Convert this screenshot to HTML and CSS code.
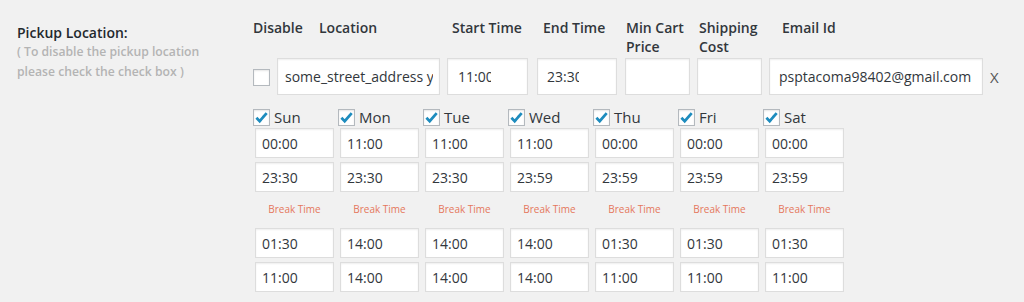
FILE: index.html
```html
<!DOCTYPE html>
<html lang="en">
<head>
<meta charset="utf-8">
<title>Pickup Location</title>
<link rel="stylesheet" href="styles.css">
</head>
<body>
<div class="form-row">
  <div class="th">
    <div class="title">Pickup Location:</div>
    <div class="hint">( To disable the pickup location<br>please check the check box )</div>
  </div>
  <div class="td">
    <div class="head">
      <span class="h w-disable">Disable</span>
      <span class="h w-location">Location</span>
      <span class="h w-start">Start Time</span>
      <span class="h w-end">End Time</span>
      <span class="h w-min">Min Cart Price</span>
      <span class="h w-ship">Shipping Cost</span>
      <span class="h w-email">Email Id</span>
    </div>
    <div class="fields">
      <span class="cb"></span>
      <input class="inp f-location" type="text" value="some_street_address y">
      <input class="inp f-start" type="text" value="11:00">
      <input class="inp f-end" type="text" value="23:30">
      <input class="inp f-min" type="text" value="">
      <input class="inp f-ship" type="text" value="">
      <input class="inp f-email" type="text" value="psptacoma98402@gmail.com">
      <span class="remove">X</span>
    </div>
    <div class="days">
      <div class="day">
        <div class="day-label"><span class="cb checked"><svg viewBox="0 0 16 16"><path d="M3.2 8.2l3.1 3.2 6.6-7.6" /></svg></span>Sun</div>
        <input class="inp time" type="text" value="00:00">
        <input class="inp time gap" type="text" value="23:30">
        <div class="break">Break Time</div>
        <input class="inp time" type="text" value="01:30">
        <input class="inp time gap" type="text" value="11:00">
      </div>
      <div class="day">
        <div class="day-label"><span class="cb checked"><svg viewBox="0 0 16 16"><path d="M3.2 8.2l3.1 3.2 6.6-7.6" /></svg></span>Mon</div>
        <input class="inp time" type="text" value="11:00">
        <input class="inp time gap" type="text" value="23:30">
        <div class="break">Break Time</div>
        <input class="inp time" type="text" value="14:00">
        <input class="inp time gap" type="text" value="14:00">
      </div>
      <div class="day">
        <div class="day-label"><span class="cb checked"><svg viewBox="0 0 16 16"><path d="M3.2 8.2l3.1 3.2 6.6-7.6" /></svg></span>Tue</div>
        <input class="inp time" type="text" value="11:00">
        <input class="inp time gap" type="text" value="23:30">
        <div class="break">Break Time</div>
        <input class="inp time" type="text" value="14:00">
        <input class="inp time gap" type="text" value="14:00">
      </div>
      <div class="day">
        <div class="day-label"><span class="cb checked"><svg viewBox="0 0 16 16"><path d="M3.2 8.2l3.1 3.2 6.6-7.6" /></svg></span>Wed</div>
        <input class="inp time" type="text" value="11:00">
        <input class="inp time gap" type="text" value="23:59">
        <div class="break">Break Time</div>
        <input class="inp time" type="text" value="14:00">
        <input class="inp time gap" type="text" value="14:00">
      </div>
      <div class="day">
        <div class="day-label"><span class="cb checked"><svg viewBox="0 0 16 16"><path d="M3.2 8.2l3.1 3.2 6.6-7.6" /></svg></span>Thu</div>
        <input class="inp time" type="text" value="00:00">
        <input class="inp time gap" type="text" value="23:59">
        <div class="break">Break Time</div>
        <input class="inp time" type="text" value="01:30">
        <input class="inp time gap" type="text" value="11:00">
      </div>
      <div class="day">
        <div class="day-label"><span class="cb checked"><svg viewBox="0 0 16 16"><path d="M3.2 8.2l3.1 3.2 6.6-7.6" /></svg></span>Fri</div>
        <input class="inp time" type="text" value="00:00">
        <input class="inp time gap" type="text" value="23:59">
        <div class="break">Break Time</div>
        <input class="inp time" type="text" value="01:30">
        <input class="inp time gap" type="text" value="11:00">
      </div>
      <div class="day">
        <div class="day-label"><span class="cb checked"><svg viewBox="0 0 16 16"><path d="M3.2 8.2l3.1 3.2 6.6-7.6" /></svg></span>Sat</div>
        <input class="inp time" type="text" value="00:00">
        <input class="inp time gap" type="text" value="23:59">
        <div class="break">Break Time</div>
        <input class="inp time" type="text" value="01:30">
        <input class="inp time gap" type="text" value="11:00">
      </div>
    </div>
  </div>
</div>
</body>
</html>
```
FILE: styles.css
```css
* { box-sizing: border-box; }
html, body {
  margin: 0;
  padding: 0;
  background: #f1f1f1;
  font-family: "Open Sans", "Noto Sans", sans-serif;
  color: #32373c;
  height: 302px;
  overflow: hidden;
}
.form-row {
  display: flex;
}
.th {
  width: 253px;
  padding: 24px 0 0 17px;
  flex: none;
}
.title {
  font-size: 14px;
  font-weight: 600;
  line-height: 18px;
  color: #23282d;
}
.hint {
  font-size: 12.2px;
  font-weight: 600;
  line-height: 20px;
  color: #b4b4b4;
}
.td {
  padding-top: 18px;
}
.head {
  display: flex;
  align-items: flex-start;
  font-size: 14px;
  font-weight: 600;
  line-height: 19px;
  color: #32373c;
  height: 38px;
}
.h { display: block; flex: none; }
.w-disable { width: 66px; }
.w-location { width: 133px; }
.w-start { width: 91px; }
.w-end { width: 83px; }
.w-min { width: 73px; padding-right: 8px; }
.w-ship { width: 83px; padding-right: 16px; }
.w-email { width: 120px; }

.fields {
  margin-top: 2px;
  display: flex;
  align-items: center;
  height: 37px;
}
.cb {
  display: inline-block;
  flex: none;
  width: 17px;
  height: 17px;
  background: #fff;
  border: 1px solid #b4b9be;
  box-shadow: inset 0 1px 2px rgba(0,0,0,.1);
  position: relative;
}
.fields .cb { margin: 2px 7px 0 0; }
.cb svg {
  position: absolute;
  left: -1px;
  top: -1px;
  width: 17px;
  height: 17px;
}
.cb path {
  fill: none;
  stroke: #1e8cbe;
  stroke-width: 2.6;
  stroke-linecap: butt;
}
.inp {
  display: block;
  flex: none;
  height: 37px;
  margin: 0;
  background: #fff;
  border: 1px solid #ddd;
  box-shadow: inset 0 1px 2px rgba(0,0,0,.07);
  font-family: "Open Sans", "Noto Sans", sans-serif;
  font-size: 14px;
  color: #32373c;
  padding: 0 4px 0 7px;
  outline: none;
}
.f-location { width: 163px; margin-right: 7px; padding-right: 6px; }
.f-start { width: 81px; margin-right: 9px; padding: 0 36px 0 10px; }
.f-end { width: 80px; margin-right: 8px; padding: 0 37px 0 9px; }
.f-min { width: 65px; margin-right: 7px; }
.f-ship { width: 65px; margin-right: 7px; }
.f-email { width: 214px; margin-right: 7px; padding-left: 9px; }
.remove {
  font-size: 15px;
  color: #555;
  line-height: 20px;
}

.days {
  display: flex;
  margin-top: 12px;
}
.day {
  width: 85px;
  flex: none;
}
.day-label {
  display: flex;
  align-items: center;
  height: 20px;
  font-size: 15px;
  color: #32373c;
  line-height: 20px;
}
.day-label .cb { margin-right: 4px; }
.time {
  width: 79px;
  height: 30px;
  margin: 1px 0 0 2px;
  padding-left: 6px;
}
.time.gap { margin-top: 4px; }
.break {
  height: 35px;
  line-height: 35px;
  font-size: 10px;
  color: #e5775c;
  text-align: center;
  padding-left: 2px;
  width: 81px;
}
```
